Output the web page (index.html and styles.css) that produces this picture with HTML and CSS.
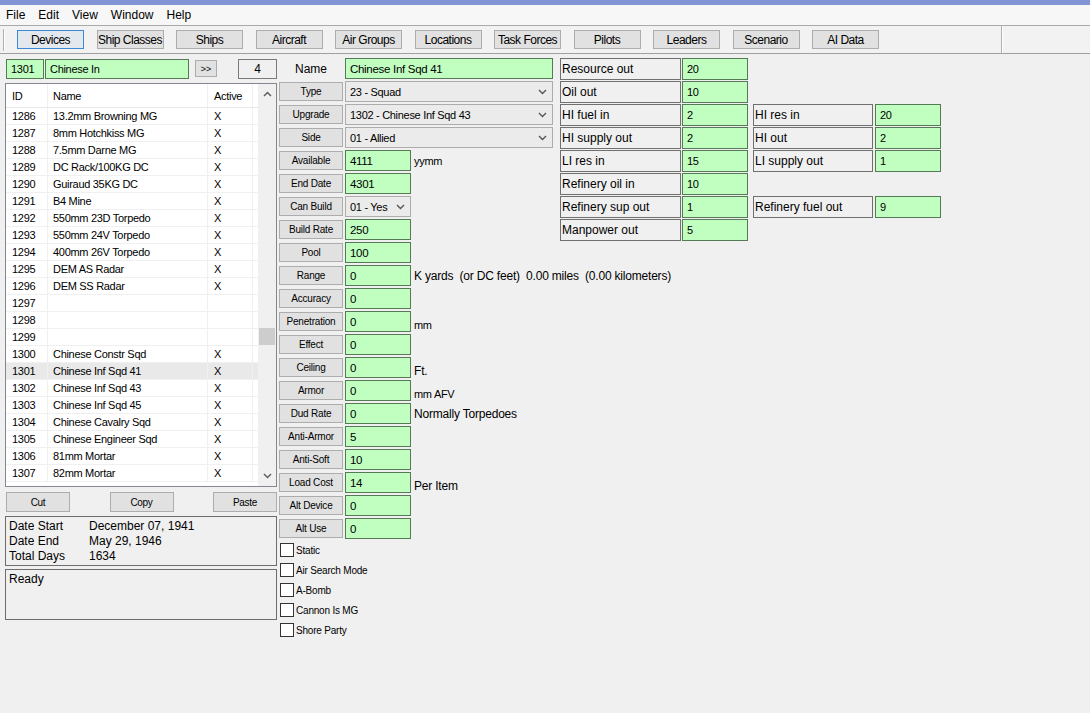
FILE: index.html
```html
<!DOCTYPE html>
<html>
<head>
<meta charset="utf-8">
<link rel="stylesheet" href="styles.css">
</head>
<body>
<div class="titlebar"></div>
<div class="menubar">
  <span>File</span><span>Edit</span><span>View</span><span>Window</span><span>Help</span>
</div>
<div class="toolbar">
  <div class="grip"></div>
  <div class="tbtn active">Devices</div>
  <div class="tbtn">Ship Classes</div>
  <div class="tbtn">Ships</div>
  <div class="tbtn">Aircraft</div>
  <div class="tbtn">Air Groups</div>
  <div class="tbtn">Locations</div>
  <div class="tbtn">Task Forces</div>
  <div class="tbtn">Pilots</div>
  <div class="tbtn">Leaders</div>
  <div class="tbtn">Scenario</div>
  <div class="tbtn">AI Data</div>
  <div class="sep"></div>
</div>
<div class="main">
  <div class="left">
    <div class="toprow">
      <div class="gfld idf">1301</div>
      <div class="gfld namef">Chinese In</div>
      <div class="btn gobtn">&gt;&gt;</div>
      <div class="countbox">4</div>
    </div>
    <div class="list">
      <div class="list-body">
        <div class="lrow head"><div class="c-id">ID</div><div class="c-name">Name</div><div class="c-act">Active</div><div class="c-blank"></div></div>
        <div class="lrow"><div class="c-id">1286</div><div class="c-name">13.2mm Browning MG</div><div class="c-act">X</div><div class="c-blank"></div></div>
        <div class="lrow"><div class="c-id">1287</div><div class="c-name">8mm Hotchkiss MG</div><div class="c-act">X</div><div class="c-blank"></div></div>
        <div class="lrow"><div class="c-id">1288</div><div class="c-name">7.5mm Darne MG</div><div class="c-act">X</div><div class="c-blank"></div></div>
        <div class="lrow"><div class="c-id">1289</div><div class="c-name">DC Rack/100KG DC</div><div class="c-act">X</div><div class="c-blank"></div></div>
        <div class="lrow"><div class="c-id">1290</div><div class="c-name">Guiraud 35KG DC</div><div class="c-act">X</div><div class="c-blank"></div></div>
        <div class="lrow"><div class="c-id">1291</div><div class="c-name">B4 Mine</div><div class="c-act">X</div><div class="c-blank"></div></div>
        <div class="lrow"><div class="c-id">1292</div><div class="c-name">550mm 23D Torpedo</div><div class="c-act">X</div><div class="c-blank"></div></div>
        <div class="lrow"><div class="c-id">1293</div><div class="c-name">550mm 24V Torpedo</div><div class="c-act">X</div><div class="c-blank"></div></div>
        <div class="lrow"><div class="c-id">1294</div><div class="c-name">400mm 26V Torpedo</div><div class="c-act">X</div><div class="c-blank"></div></div>
        <div class="lrow"><div class="c-id">1295</div><div class="c-name">DEM AS Radar</div><div class="c-act">X</div><div class="c-blank"></div></div>
        <div class="lrow"><div class="c-id">1296</div><div class="c-name">DEM SS Radar</div><div class="c-act">X</div><div class="c-blank"></div></div>
        <div class="lrow"><div class="c-id">1297</div><div class="c-name"></div><div class="c-act"></div><div class="c-blank"></div></div>
        <div class="lrow"><div class="c-id">1298</div><div class="c-name"></div><div class="c-act"></div><div class="c-blank"></div></div>
        <div class="lrow"><div class="c-id">1299</div><div class="c-name"></div><div class="c-act"></div><div class="c-blank"></div></div>
        <div class="lrow"><div class="c-id">1300</div><div class="c-name">Chinese Constr Sqd</div><div class="c-act">X</div><div class="c-blank"></div></div>
        <div class="lrow sel"><div class="c-id">1301</div><div class="c-name">Chinese Inf Sqd 41</div><div class="c-act">X</div><div class="c-blank"></div></div>
        <div class="lrow"><div class="c-id">1302</div><div class="c-name">Chinese Inf Sqd 43</div><div class="c-act">X</div><div class="c-blank"></div></div>
        <div class="lrow"><div class="c-id">1303</div><div class="c-name">Chinese Inf Sqd 45</div><div class="c-act">X</div><div class="c-blank"></div></div>
        <div class="lrow"><div class="c-id">1304</div><div class="c-name">Chinese Cavalry Sqd</div><div class="c-act">X</div><div class="c-blank"></div></div>
        <div class="lrow"><div class="c-id">1305</div><div class="c-name">Chinese Engineer Sqd</div><div class="c-act">X</div><div class="c-blank"></div></div>
        <div class="lrow"><div class="c-id">1306</div><div class="c-name">81mm Mortar</div><div class="c-act">X</div><div class="c-blank"></div></div>
        <div class="lrow"><div class="c-id">1307</div><div class="c-name">82mm Mortar</div><div class="c-act">X</div><div class="c-blank"></div></div>
      </div>
      <div class="scroll">
        <div class="arrow"><svg width="9" height="6" viewBox="0 0 9 6"><path d="M1 5 L4.5 1.5 L8 5" fill="none" stroke="#606060" stroke-width="1.5"/></svg></div>
        <div class="thumb"></div>
        <div class="track"></div>
        <div class="arrow"><svg width="9" height="6" viewBox="0 0 9 6"><path d="M1 1 L4.5 4.5 L8 1" fill="none" stroke="#606060" stroke-width="1.5"/></svg></div>
      </div>
    </div>
    <div class="btnrow">
      <div class="btn cbtn">Cut</div>
      <div class="btn cbtn">Copy</div>
      <div class="btn cbtn">Paste</div>
    </div>
    <div class="datebox">
      <div class="dline"><span class="dl">Date Start</span><span>December 07, 1941</span></div>
      <div class="dline"><span class="dl">Date End</span><span>May 29, 1946</span></div>
      <div class="dline"><span class="dl">Total Days</span><span>1634</span></div>
    </div>
    <div class="status">Ready</div>
  </div>

  <div class="form">
    <div class="fields">
      <div class="row"><div class="plain">Name</div><div class="gfld wide">Chinese Inf Sqd 41</div></div>
      <div class="row"><div class="btn lbl">Type</div><div class="select wide"><span>23 - Squad</span><svg width="9" height="6" viewBox="0 0 9 6"><path d="M1 1 L4.5 4.5 L8 1" fill="none" stroke="#555" stroke-width="1.4"/></svg></div></div>
      <div class="row"><div class="btn lbl">Upgrade</div><div class="select wide"><span>1302 - Chinese Inf Sqd 43</span><svg width="9" height="6" viewBox="0 0 9 6"><path d="M1 1 L4.5 4.5 L8 1" fill="none" stroke="#555" stroke-width="1.4"/></svg></div></div>
      <div class="row"><div class="btn lbl">Side</div><div class="select wide"><span>01 - Allied</span><svg width="9" height="6" viewBox="0 0 9 6"><path d="M1 1 L4.5 4.5 L8 1" fill="none" stroke="#555" stroke-width="1.4"/></svg></div></div>
      <div class="row"><div class="btn lbl">Available</div><div class="gfld">4111</div><div class="note">yymm</div></div>
      <div class="row"><div class="btn lbl">End Date</div><div class="gfld">4301</div></div>
      <div class="row"><div class="btn lbl">Can Build</div><div class="select short"><span>01 - Yes</span><svg width="9" height="6" viewBox="0 0 9 6"><path d="M1 1 L4.5 4.5 L8 1" fill="none" stroke="#555" stroke-width="1.4"/></svg></div></div>
      <div class="row"><div class="btn lbl">Build Rate</div><div class="gfld">250</div></div>
      <div class="row"><div class="btn lbl">Pool</div><div class="gfld">100</div></div>
      <div class="row"><div class="btn lbl">Range</div><div class="gfld">0</div><div class="note big">K yards&nbsp; (or DC feet)&nbsp; 0.00 miles&nbsp; (0.00 kilometers)</div></div>
      <div class="row"><div class="btn lbl">Accuracy</div><div class="gfld">0</div></div>
      <div class="row"><div class="btn lbl">Penetration</div><div class="gfld">0</div><div class="note low">mm</div></div>
      <div class="row"><div class="btn lbl">Effect</div><div class="gfld">0</div></div>
      <div class="row"><div class="btn lbl">Ceiling</div><div class="gfld">0</div><div class="note big low">Ft.</div></div>
      <div class="row"><div class="btn lbl">Armor</div><div class="gfld">0</div><div class="note low">mm AFV</div></div>
      <div class="row"><div class="btn lbl">Dud Rate</div><div class="gfld">0</div><div class="note big">Normally Torpedoes</div></div>
      <div class="row"><div class="btn lbl">Anti-Armor</div><div class="gfld">5</div></div>
      <div class="row"><div class="btn lbl">Anti-Soft</div><div class="gfld">10</div></div>
      <div class="row"><div class="btn lbl">Load Cost</div><div class="gfld">14</div><div class="note big low">Per Item</div></div>
      <div class="row"><div class="btn lbl">Alt Device</div><div class="gfld">0</div></div>
      <div class="row"><div class="btn lbl">Alt Use</div><div class="gfld">0</div></div>
      <div class="chk"><span class="box"></span><span>Static</span></div>
      <div class="chk"><span class="box"></span><span>Air Search Mode</span></div>
      <div class="chk"><span class="box"></span><span>A-Bomb</span></div>
      <div class="chk"><span class="box"></span><span>Cannon Is MG</span></div>
      <div class="chk"><span class="box"></span><span>Shore Party</span></div>
    </div>
    <div class="res">
      <div class="rlbl">Resource out</div><div class="gfld rfld">20</div><div></div><div></div>
      <div class="rlbl">Oil out</div><div class="gfld rfld">10</div><div></div><div></div>
      <div class="rlbl">HI fuel in</div><div class="gfld rfld">2</div><div class="rlbl r2">HI res in</div><div class="gfld rfld">20</div>
      <div class="rlbl">HI supply out</div><div class="gfld rfld">2</div><div class="rlbl r2">HI out</div><div class="gfld rfld">2</div>
      <div class="rlbl">LI res in</div><div class="gfld rfld">15</div><div class="rlbl r2">LI supply out</div><div class="gfld rfld">1</div>
      <div class="rlbl">Refinery oil in</div><div class="gfld rfld">10</div><div></div><div></div>
      <div class="rlbl">Refinery sup out</div><div class="gfld rfld">1</div><div class="rlbl r2">Refinery fuel out</div><div class="gfld rfld">9</div>
      <div class="rlbl">Manpower out</div><div class="gfld rfld">5</div><div></div><div></div>
    </div>
  </div>
</div>
</body>
</html>
```

FILE: styles.css
```css
* { box-sizing: border-box; }
html, body { margin: 0; padding: 0; }
body {
  width: 1090px;
  height: 713px;
  overflow: hidden;
  background: #f0f0f0;
  font-family: "Liberation Sans", Arial, sans-serif;
  font-size: 11px;
  letter-spacing: -0.3px;
  color: #000;
}

.titlebar { height: 5px; background: #8394d4; }

.menubar {
  height: 20px;
  background: #f7f7f7;
  display: flex;
  align-items: center;
  padding-left: 6px;
  gap: 13px;
  font-size: 12px;
  letter-spacing: 0;
}

.toolbar {
  height: 29px;
  border-top: 1px solid #a9a9a9;
  border-bottom: 1px solid #a0a0a0;
  background: #f2f2f2;
  display: flex;
  align-items: center;
  padding-left: 3px;
}
.grip {
  width: 2px;
  height: 22px;
  border-left: 1px solid #b0b0b0;
  border-right: 1px solid #ffffff;
  margin-right: 12px;
  flex-shrink: 0;
}
.tbtn {
  width: 67px;
  height: 19px;
  margin-right: 12.5px;
  flex-shrink: 0;
  border: 1px solid #adadad;
  background: #e1e1e1;
  display: flex;
  align-items: center;
  justify-content: center;
  font-size: 12px;
  letter-spacing: -0.5px;
  white-space: nowrap;
}
.tbtn.active { border-color: #3c8ad6; background: #e3e8ee; }
.sep {
  margin-left: auto;
  margin-right: 87px;
  width: 2px;
  height: 27px;
  border-left: 1px solid #b0b0b0;
  border-right: 1px solid #ffffff;
}

.main {
  display: flex;
  padding: 3px 0 0 5px;
}

.left { width: 272px; flex-shrink: 0; }

.toprow {
  height: 23px;
  display: flex;
  align-items: center;
}
.toprow > * { flex-shrink: 0; }
.gfld {
  height: 21px;
  border: 1px solid #557a55;
  background: #c0ffc0;
  padding-left: 4px;
  display: flex;
  align-items: center;
  white-space: nowrap;
  overflow: hidden;
  flex-shrink: 0;
}
.idf { width: 38px; height: 20px; margin-left: 1px; }
.namef { width: 144px; height: 20px; margin-left: 1px; }
.btn {
  border: 1px solid #adadad;
  background: #e1e1e1;
  display: flex;
  align-items: center;
  justify-content: center;
  white-space: nowrap;
  flex-shrink: 0;
}
.gobtn { width: 22px; height: 17px; margin-left: 6px; font-size: 9px; letter-spacing: 0; }
.countbox {
  width: 39px;
  height: 20px;
  margin-left: 21px;
  border: 1px solid #7a7a7a;
  background: #f0f0f0;
  display: flex;
  align-items: center;
  justify-content: center;
  font-size: 12px;
}

.list {
  margin-top: 3px;
  height: 404px;
  border: 1px solid #828790;
  background: #ffffff;
  display: flex;
}
.list-body { width: 252px; overflow: hidden; }
.lrow {
  display: flex;
  height: 17px;
  border-bottom: 1px solid #f0f0f0;
  align-items: center;
}
.lrow > div {
  height: 100%;
  display: flex;
  align-items: center;
  border-right: 1px solid #f0f0f0;
  white-space: nowrap;
  flex-shrink: 0;
}
.lrow.head { height: 24px; border-bottom: 1px solid #e8e8e8; font-size: 11px; }
.lrow.sel { background: #e9e9e9; }
.c-id { width: 42px; padding-left: 6px; }
.c-name { width: 160px; padding-left: 5px; }
.c-act { width: 45px; padding-left: 6px; }
.c-blank { width: 5px; }
.lrow > .c-blank { border-right: none; }

.scroll {
  width: 18px;
  background: #f0f0f0;
  display: flex;
  flex-direction: column;
}
.arrow {
  height: 20px;
  display: flex;
  align-items: center;
  justify-content: center;
}
.thumb {
  margin: 224px 1px 0 1px;
  height: 17px;
  background: #cdcdcd;
}
.track { flex: 1; }

.btnrow {
  margin-top: 5px;
  height: 20px;
  display: flex;
  justify-content: space-between;
  padding: 0 0 0 1px;
}
.cbtn { width: 64px; height: 20px; font-size: 10px; }

.datebox {
  margin-top: 4px;
  height: 50px;
  border: 1px solid #6d6d6d;
  padding: 1px 0 0 3px;
  font-size: 12px;
  letter-spacing: 0;
}
.dline { height: 15px; display: flex; align-items: center; }
.dl { width: 80px; }
.status {
  margin-top: 3px;
  height: 51px;
  border: 1px solid #6d6d6d;
  padding: 2px 0 0 3px;
  font-size: 12px;
  letter-spacing: 0;
}

.form {
  display: flex;
  margin-left: 2px;
}
.fields { width: 281px; flex-shrink: 0; }
.row {
  height: 23px;
  display: flex;
  align-items: center;
}
.row > * { flex-shrink: 0; }
.lbl {
  width: 64px;
  height: 19px;
  margin-right: 2px;
  font-size: 10px;
  letter-spacing: -0.2px;
}
.plain {
  width: 64px;
  margin-right: 2px;
  text-align: center;
  font-size: 12px;
  letter-spacing: 0;
}
.row .gfld { width: 66px; font-size: 11.5px; }
.row .gfld.wide { width: 208px; }
.select {
  height: 21px;
  border: 1px solid #acacac;
  background: #ebebeb;
  display: flex;
  align-items: center;
  justify-content: space-between;
  padding: 0 5px 0 4px;
  white-space: nowrap;
}
.select.wide { width: 208px; }
.select.short { width: 66px; }
.note { margin-left: 3px; white-space: nowrap; padding-top: 1px; }
.note.big { font-size: 12px; letter-spacing: -0.2px; }
.note.low { padding-top: 6px; }

.chk {
  height: 20px;
  display: flex;
  align-items: center;
  font-size: 10px;
  letter-spacing: -0.2px;
}
.box {
  width: 14px;
  height: 14px;
  margin-left: 1px;
  margin-right: 2px;
  border: 1px solid #333333;
  background: #ffffff;
  flex-shrink: 0;
}

.res {
  display: grid;
  grid-template-columns: 122px 71px 122px 66px;
  grid-auto-rows: 23px;
  align-items: center;
  align-self: flex-start;
}
.rlbl {
  width: 121px;
  height: 22px;
  border: 1px solid #707070;
  background: #f0f0f0;
  padding-left: 1px;
  display: flex;
  align-items: center;
  font-size: 12px;
  letter-spacing: 0;
  white-space: nowrap;
}
.rlbl.r2 { width: 120px; }
.rfld { width: 66px; height: 22px; }
```
